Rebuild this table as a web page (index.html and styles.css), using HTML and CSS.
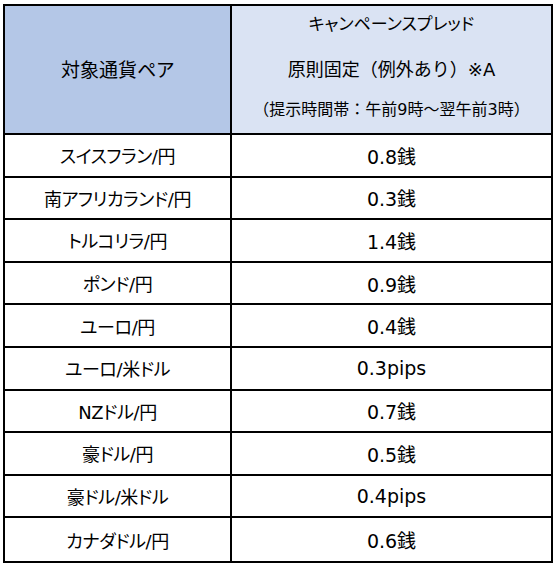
FILE: index.html
```html
<!DOCTYPE html>
<html lang="ja">
<head>
<meta charset="utf-8">
<link rel="stylesheet" href="styles.css">
</head>
<body>
<div class="sheet">
  <div class="cell head-left">対象通貨ペア</div>
  <div class="cell head-right">
    <div class="h1">キャンペーンスプレッド</div>
    <div class="h2">原則固定（例外あり）※A</div>
    <div class="h3">（提示時間帯：午前9時～翌午前3時）</div>
  </div>
  <div class="cell pair">スイスフラン/円</div><div class="cell val">0.8銭</div>
  <div class="cell pair">南アフリカランド/円</div><div class="cell val">0.3銭</div>
  <div class="cell pair">トルコリラ/円</div><div class="cell val">1.4銭</div>
  <div class="cell pair">ポンド/円</div><div class="cell val">0.9銭</div>
  <div class="cell pair">ユーロ/円</div><div class="cell val">0.4銭</div>
  <div class="cell pair">ユーロ/米ドル</div><div class="cell val">0.3pips</div>
  <div class="cell pair">NZドル/円</div><div class="cell val">0.7銭</div>
  <div class="cell pair">豪ドル/円</div><div class="cell val">0.5銭</div>
  <div class="cell pair">豪ドル/米ドル</div><div class="cell val">0.4pips</div>
  <div class="cell pair">カナダドル/円</div><div class="cell val">0.6銭</div>
</div>
</body>
</html>
```
FILE: styles.css
```css
html, body {
  margin: 0;
  padding: 0;
  background: #ffffff;
}
body {
  padding: 4px 0 0 3px;
  font-family: "DejaVu Sans", "Noto Sans CJK JP", sans-serif;
  font-feature-settings: "palt";
  color: #000;
  font-size: 19px;
}
.sheet {
  display: grid;
  grid-template-columns: 227px 1fr;
  grid-template-rows: 129px repeat(10, 1fr);
  width: 550px;
  height: 559px;
  box-sizing: border-box;
  border: 2px solid #000;
}
.cell {
  display: flex;
  align-items: center;
  justify-content: center;
  border-bottom: 2px solid #000;
  box-sizing: border-box;
  white-space: nowrap;
}
.cell:nth-last-child(-n+2) {
  border-bottom: 0;
}
.pair, .head-left {
  border-right: 2px solid #000;
}
.pair {
  font-size: 18px;
  letter-spacing: -0.4px;
}
.head-left {
  background: #b4c7e7;
  padding-bottom: 2px;
}
.head-right {
  background: #dae3f3;
  flex-direction: column;
  justify-content: flex-start;
  padding-top: 6px;
}
.h1, .h2, .h3 {
  line-height: 24px;
}
.h1 {
  font-size: 17px;
}
.h2 {
  margin-top: 22px;
  font-size: 18px;
  font-feature-settings: normal;
}
.h3 {
  margin-top: 16px;
  font-size: 16px;
  font-feature-settings: normal;
}
```
